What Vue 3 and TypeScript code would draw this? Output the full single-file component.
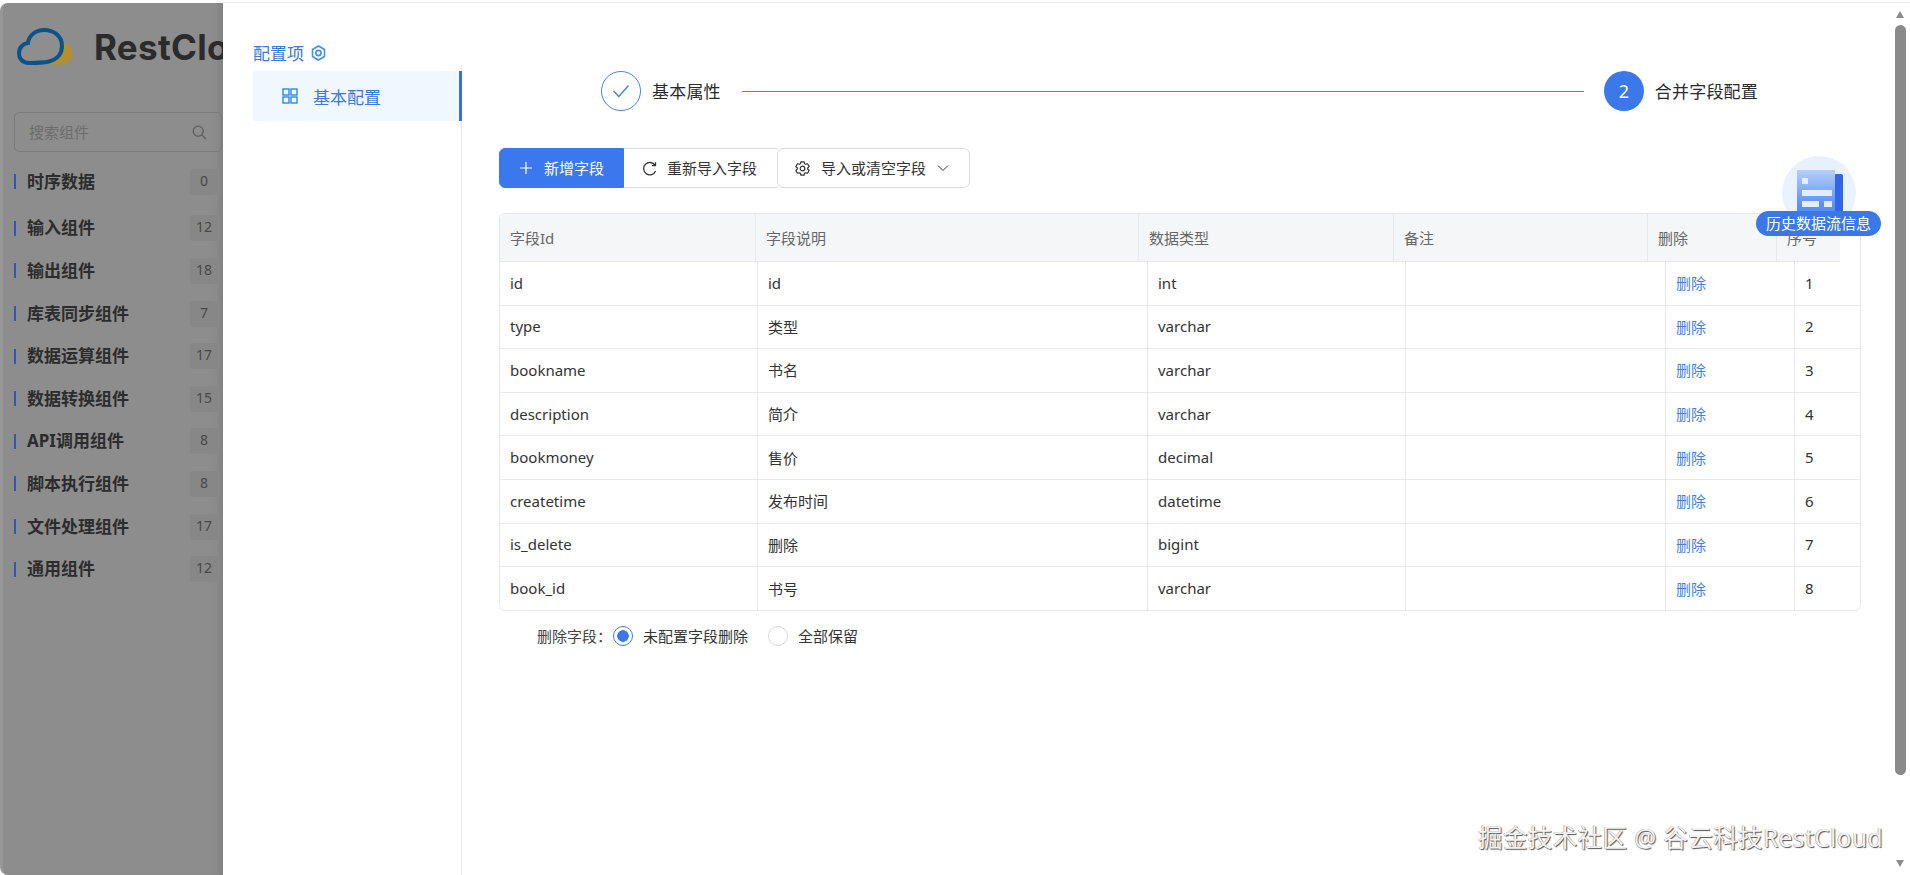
<script setup lang="ts">
interface Category { name: string; count: number }
interface Field { id: string; label: string; type: string }

const categories: Category[] = [
  { name: '时序数据', count: 0 },
  { name: '输入组件', count: 12 },
  { name: '输出组件', count: 18 },
  { name: '库表同步组件', count: 7 },
  { name: '数据运算组件', count: 17 },
  { name: '数据转换组件', count: 15 },
  { name: 'API调用组件', count: 8 },
  { name: '脚本执行组件', count: 8 },
  { name: '文件处理组件', count: 17 },
  { name: '通用组件', count: 12 },
]

const fields: Field[] = [
  { id: 'id', label: 'id', type: 'int' },
  { id: 'type', label: '类型', type: 'varchar' },
  { id: 'bookname', label: '书名', type: 'varchar' },
  { id: 'description', label: '简介', type: 'varchar' },
  { id: 'bookmoney', label: '售价', type: 'decimal' },
  { id: 'createtime', label: '发布时间', type: 'datetime' },
  { id: 'is_delete', label: '删除', type: 'bigint' },
  { id: 'book_id', label: '书号', type: 'varchar' },
]

const headers: string[] = ['字段Id', '字段说明', '数据类型', '备注', '删除', '序号']

function gearPath(): string {
  const c = 7.5
  const pt = (r: number, deg: number): string => {
    const a = (deg * Math.PI) / 180
    return `${(c + r * Math.cos(a)).toFixed(2)} ${(c + r * Math.sin(a)).toFixed(2)}`
  }
  const parts: string[] = []
  for (let i = 0; i < 6; i++) {
    const a = i * 60 - 90
    parts.push(pt(5.2, a - 24), pt(6.9, a - 13), pt(6.9, a + 13), pt(5.2, a + 24))
  }
  return 'M' + parts.join('L') + 'Z'
}
const gear = gearPath()
</script>

<template>
  <div class="page">
    <aside class="sidebar">
      <div class="brand">
        <svg class="cloud" width="56" height="38" viewBox="0 0 56 38" fill="none">
          <path d="M46 14.5C52 15 55.5 20.5 55.5 26C55.5 32 50.5 36.5 44 36.5L30 36.5C41 34 47 26 46 14.5Z" fill="#b48f2f" />
          <path d="M12 35C5 35 2 30 2 25.5C2 19.5 6 15.5 11 15C12 7 19 2 27 2C37 2 45 8 45 18C45 26 40 31.5 32 33.5C25 35 18 35 12 35Z" stroke="#0c5389" stroke-width="4" fill="#8e8e8e" />
        </svg>
        <span class="brand-name">RestCloud</span>
      </div>
      <div class="search">
        <span class="search-text">搜索组件</span>
        <svg width="15" height="15" viewBox="0 0 15 15" fill="none" stroke="#5e5e5e" stroke-width="1.3">
          <circle cx="6.2" cy="6.2" r="5" />
          <path d="M10 10L14 14" />
        </svg>
      </div>
      <ul class="cats">
        <li v-for="c in categories" :key="c.name" class="cat">
          <i class="cat-bar"></i>
          <span class="cat-name">{{ c.name }}</span>
          <span class="cat-count">{{ c.count }}</span>
        </li>
      </ul>
    </aside>

    <section class="drawer">
      <nav class="cfg">
        <div class="cfg-title">
          <span>配置项</span>
          <svg class="cfg-nut" width="15" height="16" viewBox="0 0 15 16" fill="none" stroke="#3d8fec" stroke-width="1.6">
            <path d="M7.5 1L13.5 4.5V11.5L7.5 15L1.5 11.5V4.5Z" stroke-linejoin="round" />
            <circle cx="7.5" cy="8" r="2.6" />
          </svg>
        </div>
        <div class="cfg-item">
          <svg width="16" height="16" viewBox="0 0 16 16" fill="none" stroke="#2f86e6" stroke-width="1.4">
            <rect x="1" y="1" width="6" height="6" />
            <rect x="9" y="1" width="6" height="6" />
            <rect x="1" y="9" width="6" height="6" />
            <rect x="9" y="9" width="6" height="6" />
          </svg>
          <span>基本配置</span>
        </div>
      </nav>

      <main class="main">
        <div class="steps">
          <span class="circle done">
            <svg width="18" height="14" viewBox="0 0 18 14" fill="none" stroke="#4a7fdc" stroke-width="1.4">
              <path d="M1.5 7L6.8 12.5L16.5 1.5" />
            </svg>
          </span>
          <span class="step-text">基本属性</span>
          <span class="step-line"></span>
          <span class="circle active">2</span>
          <span class="step-text">合并字段配置</span>
        </div>

        <div class="toolbar">
          <button class="btn primary" type="button">
            <svg width="14" height="14" viewBox="0 0 14 14" stroke="#fff" stroke-width="1.2"><path d="M7 1V13M1 7H13" /></svg>
            <span class="btn-text">新增字段</span>
          </button>
          <button class="btn mid" type="button">
            <svg width="15" height="15" viewBox="0 0 15 15" fill="none" stroke="#333" stroke-width="1.3">
              <path d="M13 4.2A6.2 6.2 0 1 0 13.6 10" />
              <path d="M13.5 1.2V4.7H10" />
            </svg>
            <span class="btn-text">重新导入字段</span>
          </button>
          <button class="btn last" type="button">
            <svg width="15" height="15" viewBox="0 0 15 15" fill="none" stroke="#333" stroke-width="1.2">
              <path :d="gear" stroke-linejoin="round" />
              <circle cx="7.5" cy="7.5" r="2.3" />
            </svg>
            <span class="btn-text">导入或清空字段</span>
            <svg class="chev" width="12" height="8" viewBox="0 0 12 8" fill="none" stroke="#333" stroke-width="1"><path d="M1 1.5L6 6.5L11 1.5" /></svg>
          </button>
        </div>

        <div class="table">
          <div class="thead">
            <div v-for="h in headers" :key="h" class="th">{{ h }}</div>
          </div>
          <div v-for="(f, i) in fields" :key="f.id" class="tr">
            <div class="td">{{ f.id }}</div>
            <div class="td">{{ f.label }}</div>
            <div class="td">{{ f.type }}</div>
            <div class="td"></div>
            <div class="td link">删除</div>
            <div class="td">{{ i + 1 }}</div>
          </div>
        </div>

        <div class="radios">
          <span class="radio-label">删除字段：</span>
          <span class="radio on"></span>
          <span class="radio-text">未配置字段删除</span>
          <span class="radio"></span>
          <span class="radio-text">全部保留</span>
        </div>
      </main>

      <div class="scroll">
        <i class="arrow up"></i>
        <i class="thumb"></i>
        <i class="arrow down"></i>
      </div>

      <div class="history">
        <div class="history-disc">
          <svg width="46" height="62" viewBox="0 0 46 62">
            <defs>
              <linearGradient id="docFill" x1="0" y1="0" x2="0" y2="1">
                <stop offset="0" stop-color="#b5cffc" />
                <stop offset="0.55" stop-color="#5f92f5" />
                <stop offset="1" stop-color="#3f79ee" />
              </linearGradient>
            </defs>
            <rect x="37" y="4" width="9" height="58" rx="2" fill="#2f66ea" />
            <rect x="0" y="0" width="38" height="62" fill="url(#docFill)" />
            <rect x="5" y="8" width="6" height="6" fill="#e4edfd" />
            <rect x="5" y="20" width="30" height="6" fill="#e4edfd" />
            <rect x="5" y="31" width="17" height="6" fill="#e4edfd" />
            <rect x="27" y="31" width="8" height="6" fill="#e4edfd" />
          </svg>
        </div>
        <span class="history-pill">历史数据流信息</span>
      </div>

      <div class="watermark">掘金技术社区 @ 谷云科技RestCloud</div>
    </section>
  </div>
</template>

<style>
html,
body {
  margin: 0;
  background: #fff;
  overflow: hidden;
}
</style>

<style scoped>
.page {
  display: flex;
  height: 872px;
  width: 1910px;
  padding-top: 3px;
  background: #fff;
  overflow: hidden;
  font-family: "Noto Sans", "Noto Sans CJK SC", sans-serif;
  color: #333;
}
.sidebar {
  width: 223px;
  flex: none;
  box-sizing: border-box;
  background: #8d8d8d;
  border-radius: 8px 0 0 8px;
  border-left: 3px solid #979797;
  box-shadow: inset -8px 0 8px -6px #7d7d7d;
  overflow: hidden;
}
.brand {
  display: flex;
  align-items: center;
  height: 74px;
  padding: 13px 0 0 14px;
  margin-bottom: 35px;
  box-sizing: border-box;
  white-space: nowrap;
}
.cloud {
  flex: none;
}
.brand-name {
  margin-left: 21px;
  font: 700 35px Inter, sans-serif;
  color: #2b2b2b;
  letter-spacing: 0.3px;
}
.search {
  display: flex;
  align-items: center;
  justify-content: space-between;
  box-sizing: border-box;
  width: 208px;
  height: 40px;
  margin-left: 11px;
  margin-right: -3px;
  padding: 0 14px;
  border: 1px solid #7b7b7b;
  border-radius: 5px;
  font-size: 15px;
}
.search-text {
  color: #6c6c6c;
  padding-bottom: 2px;
}
.cats {
  list-style: none;
  margin: 0;
  padding: 7.5px 0 0 11px;
}
.cat {
  display: flex;
  align-items: center;
  height: 42.6px;
}
.cat:first-child {
  height: 47.6px;
  align-items: flex-start;
  padding-top: 9px;
  box-sizing: border-box;
}
.cat-bar {
  width: 2px;
  height: 15px;
  background: #2f57b4;
  margin-right: 11px;
  flex: none;
}
.cat:first-child .cat-bar {
  margin-top: 5px;
}
.cat-name {
  flex: 1;
  font-size: 17px;
  font-weight: 700;
  color: #2c2c2c;
  line-height: 26px;
}
.cat-count {
  width: 28px;
  height: 26px;
  margin-right: 5px;
  background: #878787;
  border-radius: 3px;
  text-align: center;
  font-size: 14px;
  line-height: 24px;
  color: #484848;
}
.drawer {
  position: relative;
  flex: 1;
  display: flex;
  background: #fff;
  border-top: 1px solid #eeeeee;
  margin-top: -1px;
}
.cfg {
  width: 239px;
  flex: none;
  box-sizing: border-box;
  padding: 30px 0 0 30px;
  position: relative;
}
.cfg::after {
  content: "";
  position: absolute;
  right: 0;
  top: 62px;
  bottom: 0;
  width: 1px;
  background: #e6e6e6;
}
.cfg-title {
  display: flex;
  align-items: center;
  gap: 7px;
  height: 38px;
  font-size: 17px;
  color: #3f78d8;
}
.cfg-nut {
  margin-top: 2px;
}
.cfg-item {
  display: flex;
  align-items: center;
  gap: 15px;
  height: 50px;
  padding-left: 29px;
  background: #eff7ff;
  border-right: 3px solid #3b70df;
  font-size: 17px;
  color: #3f78d8;
  position: relative;
  z-index: 1;
}
.main {
  flex: 1;
  min-width: 0;
  padding: 68px 34px 0 37px;
}
.steps {
  display: flex;
  align-items: center;
  height: 40px;
  margin: 0 103px 0 102px;
}
.circle {
  display: flex;
  align-items: center;
  justify-content: center;
  width: 40px;
  height: 40px;
  box-sizing: border-box;
  border-radius: 50%;
  font-size: 18px;
  flex: none;
}
.circle.done {
  border: 1px solid #4a7fdc;
}
.circle.active {
  background: #3b78ea;
  color: #fff;
}
.step-text {
  margin-left: 11px;
  padding-bottom: 2px;
  font-size: 17px;
  letter-spacing: 0.2px;
  color: #2a2a2a;
  white-space: nowrap;
}
.step-line {
  flex: 1;
  height: 1px;
  margin: 0 20px 0 21px;
  background: #4a86c6;
}
.toolbar {
  display: flex;
  height: 40px;
  margin-top: 37px;
}
.btn {
  display: flex;
  align-items: center;
  justify-content: center;
  box-sizing: border-box;
  height: 40px;
  padding: 0;
  background: #fff;
  border: 1px solid #dcdcdc;
  font: 15px "Noto Sans", "Noto Sans CJK SC", sans-serif;
  color: #333;
}
.btn-text {
  padding-bottom: 2px;
}
.btn.primary {
  width: 125px;
  gap: 11px;
  background: #3b78ee;
  border-color: #3b78ee;
  border-radius: 6px 0 0 6px;
  color: #fff;
}
.btn.mid {
  width: 153px;
  gap: 10px;
  padding-right: 2px;
  border-left: none;
  border-right: none;
}
.btn.last {
  width: 193px;
  gap: 11px;
  padding-right: 3px;
  border-radius: 6px;
}
.table {
  margin-top: 25px;
  box-sizing: border-box;
  border: 1px solid #e8e8e8;
  border-radius: 6px;
  font-size: 15px;
  height: 398px;
}
.thead {
  display: grid;
  grid-template-columns: 256px 383px 255px 254px 129px 63px;
  width: 1340px;
  height: 48px;
  box-sizing: border-box;
  background: #f5f6f8;
  border-bottom: 1px solid #e8e8e8;
  border-radius: 6px 0 0 0;
}
.th {
  display: flex;
  align-items: center;
  padding: 0 0 0 10px;
  color: #666;
  border-right: 1px solid #e9e9e9;
}
.th:last-child {
  border-right: none;
}
.tr {
  display: grid;
  grid-template-columns: 258px 390px 258px 260px 129px 65px;
  height: 43.6px;
  box-sizing: border-box;
  border-bottom: 1px solid #e8e8e8;
}
.tr:last-child {
  border-bottom: none;
}
.td {
  display: flex;
  align-items: center;
  padding: 0 0 1px 10px;
  border-right: 1px solid #e8e8e8;
  color: #333;
  min-width: 0;
}
.td:last-child {
  border-right: none;
}
.td.link {
  color: #4a7fdc;
}
.radios {
  display: flex;
  align-items: center;
  height: 20px;
  margin-top: 15px;
  padding-left: 38px;
  font-size: 15px;
}
.radio-label {
  width: 76px;
  padding-bottom: 2px;
  color: #444;
  white-space: nowrap;
}
.radio {
  box-sizing: border-box;
  width: 20px;
  height: 20px;
  border: 1px solid #dadada;
  border-radius: 50%;
  flex: none;
}
.radio.on {
  border-color: #3b78ea;
  background: radial-gradient(circle, #3b78ea 0 5.5px, #fff 6px);
}
.radio-text {
  margin: 0 20px 0 10px;
  padding-bottom: 2px;
  color: #333;
  white-space: nowrap;
}
.scroll {
  width: 15px;
  flex: none;
  display: flex;
  flex-direction: column;
  align-items: flex-start;
  padding-top: 8px;
}
.arrow {
  display: block;
  margin-left: 1px;
  width: 0;
  height: 0;
  border-left: 4.5px solid transparent;
  border-right: 4.5px solid transparent;
}
.arrow.up {
  border-bottom: 7px solid #8c8c8c;
}
.arrow.down {
  border-top: 7px solid #8c8c8c;
  margin-top: 85px;
}
.thumb {
  display: block;
  width: 11px;
  height: 750px;
  margin-top: 7px;
  background: #8a8a8a;
  border-radius: 6px;
}
.history {
  position: absolute;
  left: 1533px;
  top: 153px;
  width: 125px;
  height: 81px;
  display: flex;
  justify-content: center;
}
.history-disc {
  width: 74px;
  height: 74px;
  border-radius: 50%;
  background: linear-gradient(180deg, #e7f0fd, #edf4fe);
  display: flex;
  justify-content: center;
  overflow: hidden;
  box-sizing: border-box;
  padding: 14px 0 0 3px;
}
.history-pill {
  position: absolute;
  left: 0;
  top: 55px;
  width: 125px;
  height: 25px;
  border-radius: 13px;
  background: #3b78e6;
  color: #fff;
  font-size: 15px;
  line-height: 24px;
  text-align: center;
  white-space: nowrap;
}
.watermark {
  position: absolute;
  left: 1255px;
  top: 818px;
  font-size: 24.5px;
  line-height: 34px;
  letter-spacing: 0.4px;
  color: #f2f2f2;
  text-shadow: 1px 1px 1px #555, -0.5px -0.5px 0 #999;
  white-space: nowrap;
}
</style>
